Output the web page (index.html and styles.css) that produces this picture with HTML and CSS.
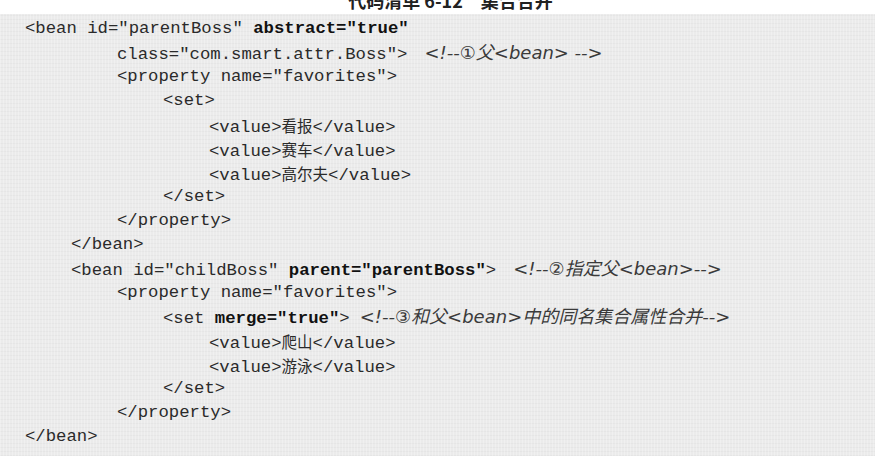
FILE: index.html
```html
<!DOCTYPE html>
<html lang="zh">
<head>
<meta charset="utf-8">
<title>代码清单 6-12 集合合并</title>
<link rel="stylesheet" href="styles.css">
</head>
<body>
<div class="caption"><span class="caption-text">代码清单 6-12　集合合并</span></div>
<div class="listing">
  <div class="line l0">&lt;bean id="parentBoss" <b>abstract="true"</b></div>
  <div class="line l2">class="com.smart.attr.Boss"&gt;<span class="cm">&lt;!--①父&lt;bean&gt; --&gt;</span></div>
  <div class="line l2">&lt;property name="favorites"&gt;</div>
  <div class="line l3">&lt;set&gt;</div>
  <div class="line l4">&lt;value&gt;<span class="cn">看报</span>&lt;/value&gt;</div>
  <div class="line l4">&lt;value&gt;<span class="cn">赛车</span>&lt;/value&gt;</div>
  <div class="line l4">&lt;value&gt;<span class="cn">高尔夫</span>&lt;/value&gt;</div>
  <div class="line l3">&lt;/set&gt;</div>
  <div class="line l2">&lt;/property&gt;</div>
  <div class="line l1">&lt;/bean&gt;</div>
  <div class="line l1">&lt;bean id="childBoss" <b>parent="parentBoss"</b>&gt;<span class="cm">&lt;!--②指定父&lt;bean&gt;--&gt;</span></div>
  <div class="line l2">&lt;property name="favorites"&gt;</div>
  <div class="line l3">&lt;set <b>merge="true"</b>&gt;<span class="cm cm-narrow">&lt;!--③和父&lt;bean&gt;中的同名集合属性合并--&gt;</span></div>
  <div class="line l4">&lt;value&gt;<span class="cn">爬山</span>&lt;/value&gt;</div>
  <div class="line l4">&lt;value&gt;<span class="cn">游泳</span>&lt;/value&gt;</div>
  <div class="line l3">&lt;/set&gt;</div>
  <div class="line l2">&lt;/property&gt;</div>
  <div class="line l0">&lt;/bean&gt;</div>
</div>
</body>
</html>
```
FILE: styles.css
```css
html, body {
  margin: 0;
  padding: 0;
  background: #ffffff;
}

body {
  width: 881px;
  height: 466px;
  overflow: hidden;
}

.caption {
  height: 14px;
  overflow: hidden;
  display: flex;
  align-items: flex-end;
  justify-content: center;
}

.caption-text {
  font-family: "Noto Sans CJK SC", sans-serif;
  font-weight: 700;
  font-size: 18px;
  line-height: 20px;
  color: #222;
  margin-bottom: 4px;
  margin-left: 20px;
}

.listing {
  margin-right: 6px;
  padding: 3px 0 7px 0;
  background-color: #ebebeb;
  background-image:
    repeating-linear-gradient(90deg, rgba(255,255,255,0.25) 0 1px, rgba(0,0,0,0) 1px 3px),
    repeating-linear-gradient(0deg, rgba(0,0,0,0.025) 0 1px, rgba(0,0,0,0) 1px 4px);
  font-family: "Liberation Mono", "Courier New", "Noto Sans CJK SC", monospace;
  font-size: 17.3px;
  color: #2a2a2a;
}

.line {
  height: 24px;
  line-height: 24px;
  white-space: pre;
}

.line b {
  font-weight: 700;
  color: #111;
}

.l0 { padding-left: 25px; }
.l1 { padding-left: 71px; }
.l2 { padding-left: 117px; }
.l3 { padding-left: 163px; }
.l4 { padding-left: 209px; }

.cn {
  font-family: "Noto Sans CJK SC", sans-serif;
  font-size: 15.5px;
}

.cm {
  font-family: "DejaVu Sans", "Noto Sans CJK SC", sans-serif;
  font-style: italic;
  font-size: 18px;
  margin-left: 17px;
  color: #3a3a3a;
}

.cm-narrow { margin-left: 10px; }
```
